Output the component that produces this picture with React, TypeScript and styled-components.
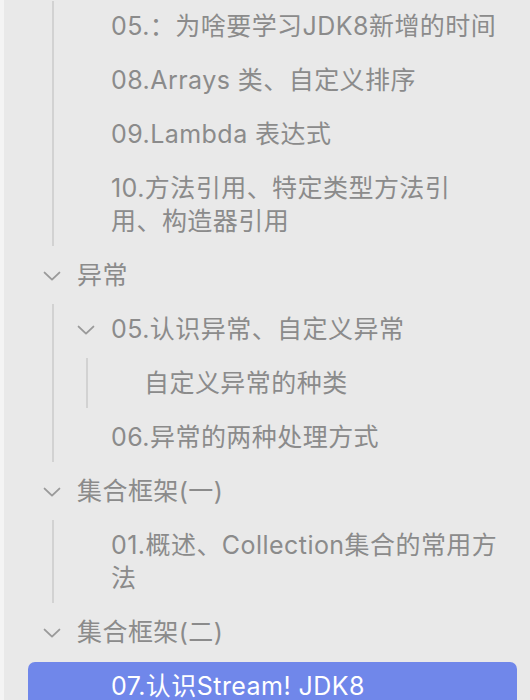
import React from "react";
import styled, { createGlobalStyle } from "styled-components";

const Global = createGlobalStyle`
  html, body { margin: 0; padding: 0; background: #e9e9e9; }
  body { font-family: "Inter", "Noto Sans CJK SC", sans-serif; }
`;

const Page = styled.div`
  display: flex;
  width: 530px;
  height: 700px;
  overflow: hidden;
`;

const Strip = styled.div`
  width: 4px;
  flex: none;
  background: #f4f4f4;
`;

const Sidebar = styled.nav`
  flex: 1;
  background: #e9e9e9;
  overflow: hidden;
  padding-right: 20px;
  font-family: "Inter", "Noto Sans CJK SC", sans-serif;
  font-size: 25px;
  letter-spacing: 0.45px;
  color: #8b8b8b;
`;

const Tree = styled.div`
  margin-top: -1px;
  display: flex;
  flex-direction: column;
`;

const Group = styled.div<{ $offset: number }>`
  position: relative;
  margin-left: ${(p) => p.$offset}px;
  padding-left: 2px;
  display: flex;
  flex-direction: column;
  &::before {
    content: "";
    position: absolute;
    left: 0;
    top: 2px;
    bottom: 2px;
    width: 2px;
    background: #d2d2d2;
  }
`;

const Row = styled.div<{ $pad: number }>`
  display: flex;
  align-items: flex-start;
  padding: 10.5px 0 10.5px ${(p) => p.$pad}px;
  line-height: 33px;
`;

const ActiveRow = styled(Row)`
  margin: 3px -7px 0 24px;
  padding-top: 7.5px;
  background: #7087ea;
  border-radius: 7px;
  color: #ffffff;
`;

const Chevron = styled.svg`
  width: 18px;
  height: 10px;
  flex: none;
  margin: 12px 16px 0 0;
`;

const Label = styled.span`
  flex: 1;
  min-width: 0;
  white-space: nowrap;
`;

const Arrow = () => (
  <Chevron viewBox="0 0 18 10" aria-hidden>
    <path
      d="M1.6 1.6 L9 8.6 L16.4 1.6"
      fill="none"
      stroke="#9a9a9a"
      strokeWidth="1.9"
      strokeLinecap="round"
      strokeLinejoin="round"
    />
  </Chevron>
);

export default function App() {
  return (
    <>
      <Global />
      <Page>
        <Strip />
        <Sidebar>
          <Tree>
            <Group $offset={48}>
              <Row $pad={57}>
                <Label>05.：为啥要学习JDK8新增的时间</Label>
              </Row>
              <Row $pad={57}>
                <Label>08.Arrays 类、自定义排序</Label>
              </Row>
              <Row $pad={57}>
                <Label>09.Lambda 表达式</Label>
              </Row>
              <Row $pad={57}>
                <Label>
                  10.方法引用、特定类型方法引
                  <br />
                  用、构造器引用
                </Label>
              </Row>
            </Group>
            <Row $pad={39}>
              <Arrow />
              <Label>异常</Label>
            </Row>
            <Group $offset={48}>
              <Row $pad={23}>
                <Arrow />
                <Label>05.认识异常、自定义异常</Label>
              </Row>
              <Group $offset={32}>
                <Row $pad={56}>
                  <Label>自定义异常的种类</Label>
                </Row>
              </Group>
              <Row $pad={57}>
                <Label>06.异常的两种处理方式</Label>
              </Row>
            </Group>
            <Row $pad={39}>
              <Arrow />
              <Label>集合框架(一)</Label>
            </Row>
            <Group $offset={48}>
              <Row $pad={57}>
                <Label>
                  01.概述、Collection集合的常用方
                  <br />
                  法
                </Label>
              </Row>
            </Group>
            <Row $pad={39}>
              <Arrow />
              <Label>集合框架(二)</Label>
            </Row>
            <ActiveRow $pad={83}>
              <Label>07.认识Stream! JDK8</Label>
            </ActiveRow>
          </Tree>
        </Sidebar>
      </Page>
    </>
  );
}
